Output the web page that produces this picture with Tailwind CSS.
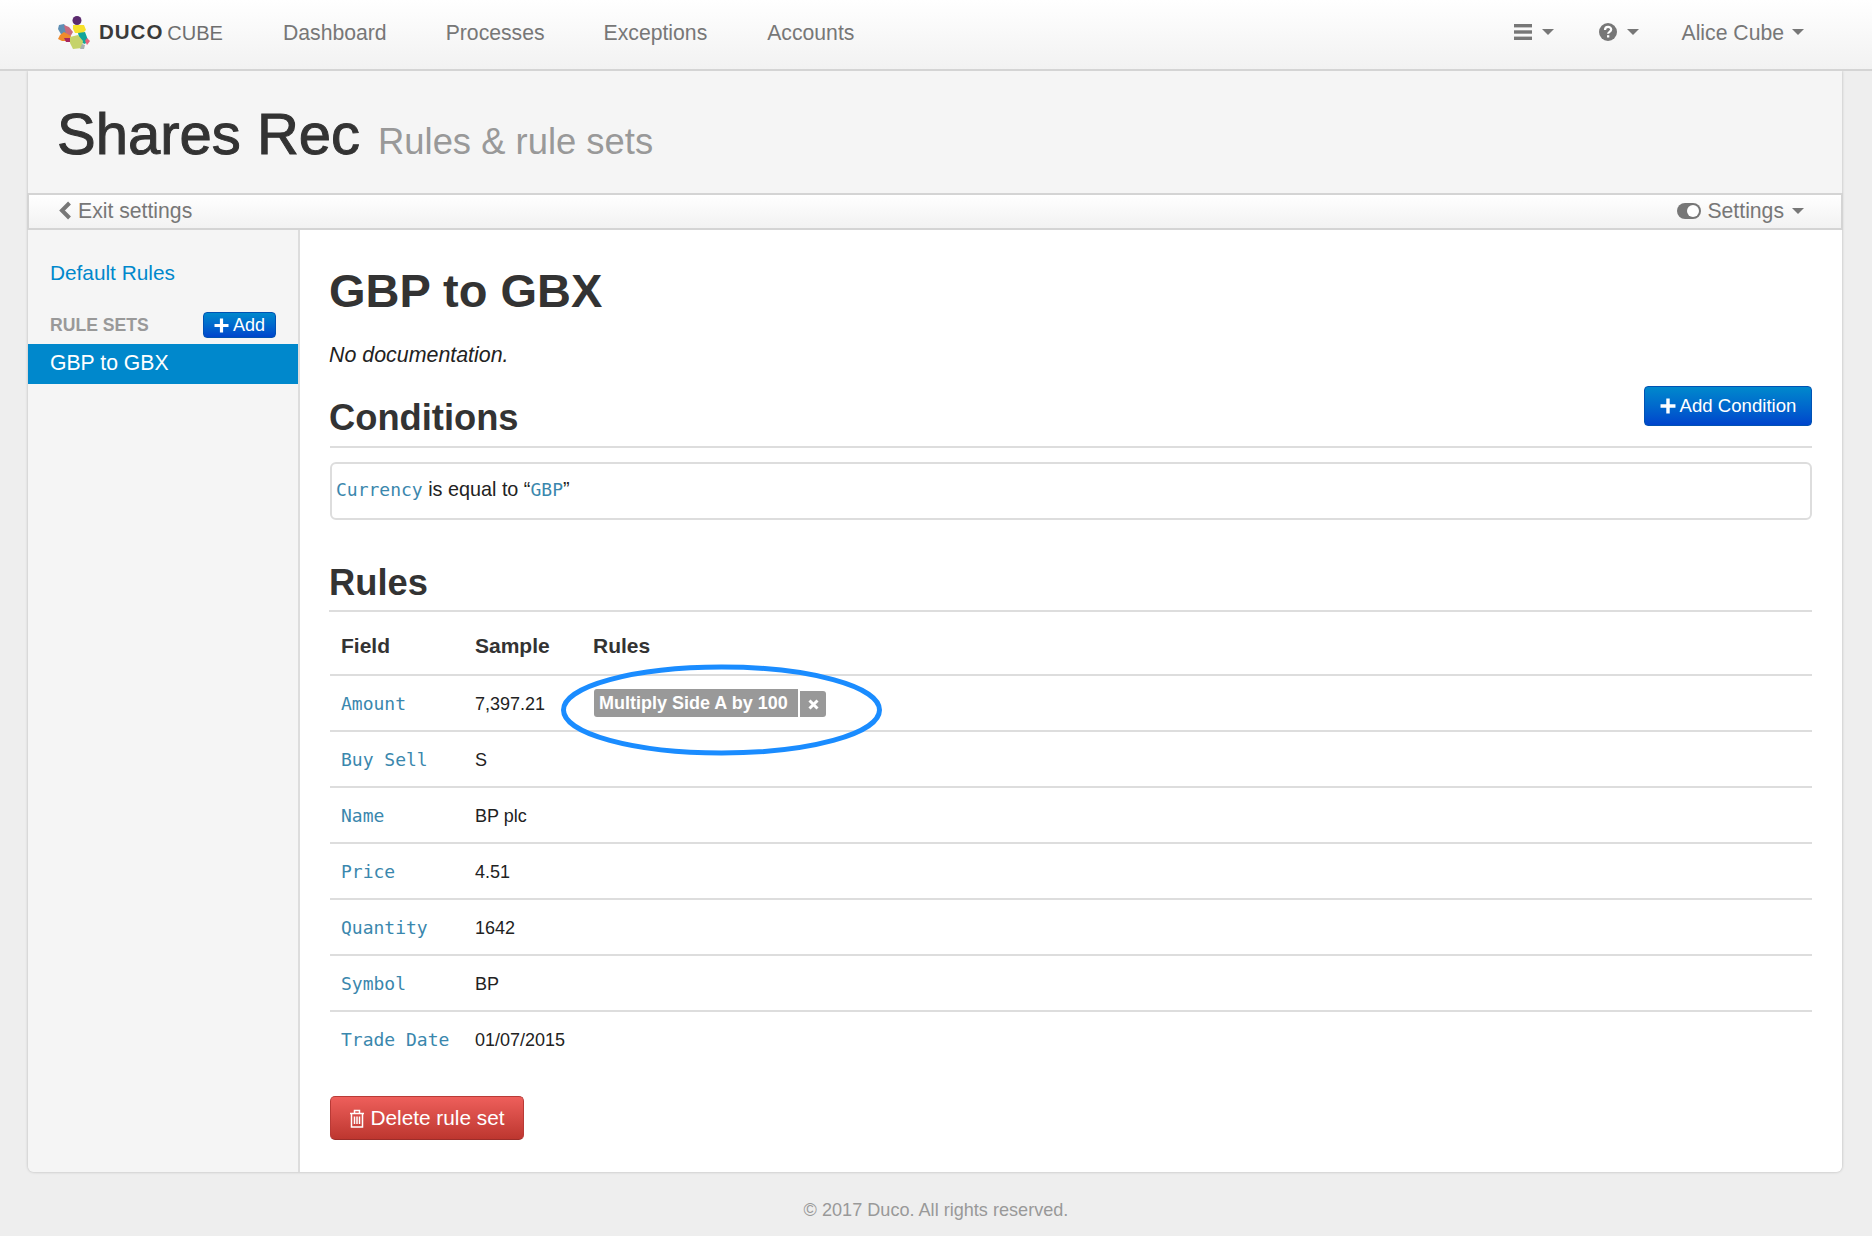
<!DOCTYPE html>
<html lang="en">
<head>
    <meta charset="UTF-8">
    <title>Shares Rec - Rules &amp; rule sets</title>
    <script src="https://cdn.jsdelivr.net/npm/@tailwindcss/browser@4"></script>
</head>
<body class="bg-[#eeeeee] font-['Liberation_Sans',Arial,sans-serif] text-[#333333] h-[1236px] overflow-hidden">

    <!-- top nav -->
    <nav class="relative z-10 h-[71px] bg-gradient-to-b from-white to-[#f2f2f2] border-b-2 border-[#d4d4d4] flex items-center text-[#777777] text-[21.200px] pb-[4px]">
        <div class="w-[283px] pl-[58px] flex items-center shrink-0">
            <svg width="32" height="34" viewBox="0 0 32 34" class="mr-[9px]">
                <circle cx="19" cy="4.5" r="4.5" fill="#5b2a6e"/>
                <polygon points="15,9 26,9 28,14 25,17 17,17 15,13" fill="#f7e12b"/>
                <polygon points="1,9 6,8 12,16 10,21 4,20 0,13" fill="#5f8fb5"/>
                <polygon points="6,9 11,11 15,16 12,21 8,18" fill="#c96a7d"/>
                <polygon points="2,19 6,16 13,20 11,25 4,25 0,23" fill="#ef8b2c"/>
                <polygon points="6,22 12,22 12,26 8,26" fill="#a8285f"/>
                <polygon points="20,17 27,16 30,24 27,28 22,26" fill="#12a59a"/>
                <polygon points="12,21 20,19 25,25 24,32 15,33 12,27" fill="#c5d36a"/>
                <polygon points="29,22 32,25 29,29 27,25" fill="#e8607a"/>
                <polygon points="24,28 27,29 26,33 22,33" fill="#a9b0ae"/>
            </svg>
            <span class="text-[20.500px] font-bold text-[#3a3a3a] tracking-[1px] leading-none">DUCO</span>
            <span class="text-[20px] text-[#6f6f6f] ml-[4px] leading-none">CUBE</span>
        </div>
        <a>Dashboard</a>
        <a class="ml-[59px]">Processes</a>
        <a class="ml-[59px]">Exceptions</a>
        <a class="ml-[60px]">Accounts</a>
        <div class="ml-auto flex items-center pr-[68px]">
            <svg width="18" height="16" viewBox="0 0 18 16" fill="#777777"><rect y="0" width="18" height="3.4"/><rect y="6.3" width="18" height="3.4"/><rect y="12.6" width="18" height="3.4"/></svg>
            <span class="ml-[10px] w-0 h-0 border-x-[6px] border-x-transparent border-t-[6px] border-t-[#777777]"></span>
            <svg class="ml-[45px]" width="18" height="18" viewBox="0 0 18 18"><circle cx="9" cy="9" r="9" fill="#777777"/><path d="M6 7c0-4 6.200-4 6.200-.4 0 2.200-3.100 2.200-3.100 4.200" fill="none" stroke="#ffffff" stroke-width="2.200"/><rect x="8" y="12.200" width="2.300" height="2.300" fill="#ffffff"/></svg>
            <span class="ml-[10px] w-0 h-0 border-x-[6px] border-x-transparent border-t-[6px] border-t-[#777777]"></span>
            <span class="ml-[43px]">Alice Cube</span>
            <span class="ml-[8px] w-0 h-0 border-x-[6px] border-x-transparent border-t-[6px] border-t-[#777777]"></span>
        </div>
    </nav>

    <div class="mx-[28px] w-[1814px] shadow-[0_0_3px_rgba(0,0,0,0.25)] rounded-b-[6px]">
        <!-- page title -->
        <header class="h-[122px] bg-[#f5f5f5] pl-[29px] flex items-baseline pt-[27px]">
            <h1 class="text-[58px] leading-[72px] text-[#333333] [-webkit-text-stroke:1px_#333333]">Shares Rec</h1>
            <span class="ml-[18px] text-[36.400px] text-[#999999]">Rules &amp; rule sets</span>
        </header>

        <!-- settings bar -->
        <div class="-mx-[1px] h-[37px] border-2 border-[#d4d4d4] bg-gradient-to-b from-white to-[#f2f2f2] flex items-center text-[#777777] text-[21.200px] pl-[30px] pr-[37px] pb-[2px]">
            <svg width="13" height="19" viewBox="0 0 13 19" class="mr-[6px]"><path d="M10.500 2 L3 9.500 L10.500 17" fill="none" stroke="#777777" stroke-width="4"/></svg>
            <span>Exit settings</span>
            <svg class="ml-auto mr-[6px]" width="24" height="16" viewBox="0 0 24 16"><rect width="24" height="16" rx="8" fill="#777777"/><circle cx="16" cy="8" r="6" fill="#ffffff"/></svg>
            <span>Settings</span>
            <span class="ml-[8px] w-0 h-0 border-x-[6px] border-x-transparent border-t-[6px] border-t-[#777777]"></span>
        </div>

        <div class="flex h-[942px]">
            <!-- sidebar -->
            <aside class="w-[272px] shrink-0 bg-[#f5f5f5] border-r-2 border-[#dddddd] rounded-bl-[6px] pt-[31px]">
                <a class="block pl-[22px] text-[20.800px] leading-[24px] text-[#0088cc]">Default Rules</a>
                <div class="flex items-center justify-between pl-[22px] pr-[22px] mt-[27px] h-[26px]">
                    <span class="text-[17.600px] font-bold text-[#999999]">RULE SETS</span>
                    <button class="h-[26px] w-[73px] rounded-[4px] border border-[#0052b3] bg-gradient-to-b from-[#0088cc] to-[#0044cc] text-white text-[18px] flex items-center justify-center">
                        <svg width="15" height="15" viewBox="0 0 15 15" class="mr-[4px]"><path d="M7.500 0.500V14.500M0.500 7.500H14.500" stroke="#ffffff" stroke-width="3.200"/></svg>Add
                    </button>
                </div>
                <a class="block mt-[6px] h-[40px] leading-[38px] pl-[22px] bg-[#0088cc] text-white text-[21.200px]">GBP to GBX</a>
            </aside>

            <!-- main -->
            <main class="flex-1 bg-white rounded-br-[6px] pl-[30px] pr-[30px] pt-[33px]">
                <h2 class="-ml-[1px] text-[47px] leading-[56px] font-bold text-[#333333]">GBP to GBX</h2>
                <p class="-ml-[1px] mt-[24px] text-[21.400px] leading-[24px] italic text-[#222222]">No documentation.</p>

                <div class="flex items-end justify-between border-b-2 border-[#dddddd] mt-[20px] h-[61px] pb-[8px]">
                    <h3 class="-ml-[1px] text-[36.300px] leading-[44px] font-bold -mb-[2px]">Conditions</h3>
                    <button class="h-[40px] w-[168px] mb-[12px] rounded-[4px] border border-[#0052b3] bg-gradient-to-b from-[#0088cc] to-[#0044cc] text-white text-[18.600px] flex items-center justify-center">
                        <svg width="16" height="16" viewBox="0 0 15 15" class="mr-[4px]"><path d="M7.500 0.500V14.500M0.500 7.500H14.500" stroke="#ffffff" stroke-width="3.200"/></svg>Add Condition
                    </button>
                </div>

                <div class="mt-[14px] h-[58px] border-2 border-[#dddddd] rounded-[6px] pl-[4px] pt-[13px] text-[19.800px] leading-[24px] text-[#222222]">
                    <code class="font-['DejaVu_Sans_Mono',monospace] text-[#3a87ad] text-[18px]">Currency</code> is equal to “<code class="font-['DejaVu_Sans_Mono',monospace] text-[#3a87ad] text-[18px]">GBP</code>”
                </div>

                <h3 class="-ml-[1px] mt-[41px] text-[36.300px] leading-[44px] font-bold pb-[5px] border-b-2 border-[#dddddd]">Rules</h3>

                <div class="relative">
                    <table class="w-full border-collapse text-[18px] text-[#222222]">
                        <thead>
                            <tr class="h-[63px] border-b-2 border-[#dddddd] text-[21px] text-[#333333] font-bold text-left">
                                <th class="w-[133px] pl-[11px] pt-[6px]">Field</th>
                                <th class="w-[118px] pl-[12px] pt-[6px]">Sample</th>
                                <th class="pl-[12px] pt-[6px]">Rules</th>
                            </tr>
                        </thead>
                        <tbody>
                            <tr class="h-[56px] border-b-2 border-[#dddddd]">
                                <td class="pl-[11px] font-['DejaVu_Sans_Mono',monospace] text-[18px] text-[#3a87ad]">Amount</td>
                                <td class="pl-[12px] pt-[2px]">7,397.21</td>
                                <td class="pl-[13px]">
                                    <span class="inline-flex h-[28px] text-white font-bold text-[18px] leading-[28px] align-middle">
                                        <span class="bg-[#999999] rounded-l-[3px] pl-[5px] w-[204px] whitespace-nowrap">Multiply Side A by 100</span>
                                        <span class="bg-[#999999] rounded-r-[3px] ml-[2px] mt-[2px] w-[26px] h-[26px] flex items-center justify-center">
                                            <svg width="11" height="11" viewBox="0 0 11 11"><path d="M1.500 1.500L9.500 9.500M9.500 1.500L1.500 9.500" stroke="#ffffff" stroke-width="3"/></svg>
                                        </span>
                                    </span>
                                </td>
                            </tr>
                            <tr class="h-[56px] border-b-2 border-[#dddddd]">
                                <td class="pl-[11px] font-['DejaVu_Sans_Mono',monospace] text-[18px] text-[#3a87ad]">Buy Sell</td>
                                <td class="pl-[12px] pt-[2px]">S</td><td></td>
                            </tr>
                            <tr class="h-[56px] border-b-2 border-[#dddddd]">
                                <td class="pl-[11px] font-['DejaVu_Sans_Mono',monospace] text-[18px] text-[#3a87ad]">Name</td>
                                <td class="pl-[12px] pt-[2px]">BP plc</td><td></td>
                            </tr>
                            <tr class="h-[56px] border-b-2 border-[#dddddd]">
                                <td class="pl-[11px] font-['DejaVu_Sans_Mono',monospace] text-[18px] text-[#3a87ad]">Price</td>
                                <td class="pl-[12px] pt-[2px]">4.51</td><td></td>
                            </tr>
                            <tr class="h-[56px] border-b-2 border-[#dddddd]">
                                <td class="pl-[11px] font-['DejaVu_Sans_Mono',monospace] text-[18px] text-[#3a87ad]">Quantity</td>
                                <td class="pl-[12px] pt-[2px]">1642</td><td></td>
                            </tr>
                            <tr class="h-[56px] border-b-2 border-[#dddddd]">
                                <td class="pl-[11px] font-['DejaVu_Sans_Mono',monospace] text-[18px] text-[#3a87ad]">Symbol</td>
                                <td class="pl-[12px] pt-[2px]">BP</td><td></td>
                            </tr>
                            <tr class="h-[56px]">
                                <td class="pl-[11px] font-['DejaVu_Sans_Mono',monospace] text-[18px] text-[#3a87ad]">Trade Date</td>
                                <td class="pl-[12px] pt-[2px]">01/07/2015</td><td></td>
                            </tr>
                        </tbody>
                    </table>
                    <!-- hand drawn highlight round the rule -->
                    <svg class="absolute left-[231px] top-[52px] pointer-events-none" width="321" height="92" viewBox="0 0 321 92">
                        <ellipse cx="160.500" cy="46" rx="158" ry="43" fill="none" stroke="#1a8cff" stroke-width="5"/>
                    </svg>
                </div>

                <button class="mt-[29px] h-[44px] w-[194px] rounded-[5px] border border-[#b93a36] border-b-[#9c2d2a] bg-gradient-to-b from-[#ee5f5b] to-[#bd362f] text-white text-[20.800px] flex items-center justify-center">
                    <svg width="16" height="19" viewBox="0 0 15 19" class="mr-[5px]" fill="none" stroke="#ffffff" stroke-width="1.500"><path d="M0.500 4.500H14.500M5 4.500V1.500H10V4.500M2 4.500V18H13V4.500M5 7.500V15M7.500 7.500V15M10 7.500V15"/></svg>
                    Delete rule set
                </button>
            </main>
        </div>
    </div>

    <footer class="text-center text-[#999999] text-[18.100px] mt-[25px]">© 2017 Duco. All rights reserved.</footer>
</body>
</html>
